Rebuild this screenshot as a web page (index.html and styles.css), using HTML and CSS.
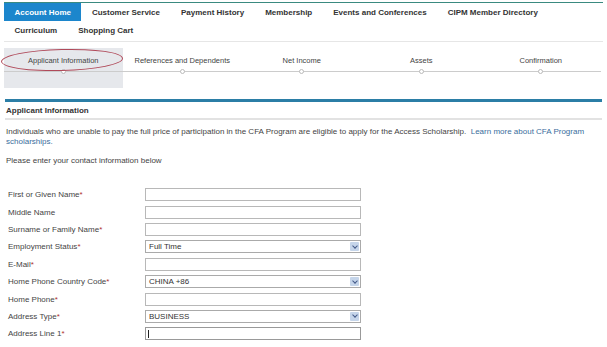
FILE: index.html
```html
<!DOCTYPE html>
<html lang="en">
  <head>
    <meta charset="UTF-8" />
    <meta name="viewport" content="width=device-width, initial-scale=1.0" />
    <title>Access Scholarship - Applicant Information</title>
    <link rel="stylesheet" href="styles.css">
  </head>
  <body>
    <div class="page">
      <nav class="topnav">
        <div class="nav-row">
          <a class="nav-item active">Account Home</a>
          <a class="nav-item">Customer Service</a>
          <a class="nav-item">Payment History</a>
          <a class="nav-item">Membership</a>
          <a class="nav-item">Events and Conferences</a>
          <a class="nav-item">CIPM Member Directory</a>
        </div>
        <div class="nav-row">
          <a class="nav-item">Curriculum</a>
          <a class="nav-item">Shopping Cart</a>
        </div>
      </nav>

      <div class="steps">
        <div class="step current">
          <span class="step-label">Applicant Information</span>
          <span class="step-dot"></span>
          <span class="step-circle"></span>
        </div>
        <div class="step">
          <span class="step-label">References and Dependents</span>
          <span class="step-dot"></span>
        </div>
        <div class="step">
          <span class="step-label">Net Income</span>
          <span class="step-dot"></span>
        </div>
        <div class="step">
          <span class="step-label">Assets</span>
          <span class="step-dot"></span>
        </div>
        <div class="step">
          <span class="step-label">Confirmation</span>
          <span class="step-dot"></span>
        </div>
      </div>

      <section class="panel">
        <h2 class="panel-title">Applicant Information</h2>
        <p class="intro">
          Individuals who are unable to pay the full price of participation in the CFA Program are eligible to apply for the Access Scholarship.&nbsp;
          <a class="link">Learn more about CFA Program scholarships.</a>
        </p>
        <p class="hint">Please enter your contact information below</p>

        <form class="form">
          <div class="row">
            <label>First or Given Name<span class="req">*</span></label>
            <input type="text" class="field" />
          </div>
          <div class="row">
            <label>Middle Name</label>
            <input type="text" class="field" />
          </div>
          <div class="row">
            <label>Surname or Family Name<span class="req">*</span></label>
            <input type="text" class="field" />
          </div>
          <div class="row">
            <label>Employment Status<span class="req">*</span></label>
            <div class="field select">Full Time<span class="arrow"></span></div>
          </div>
          <div class="row">
            <label>E-Mail<span class="req">*</span></label>
            <input type="text" class="field" />
          </div>
          <div class="row">
            <label>Home Phone Country Code<span class="req">*</span></label>
            <div class="field select">CHINA +86<span class="arrow"></span></div>
          </div>
          <div class="row">
            <label>Home Phone<span class="req">*</span></label>
            <input type="text" class="field" />
          </div>
          <div class="row">
            <label>Address Type<span class="req">*</span></label>
            <div class="field select">BUSINESS<span class="arrow"></span></div>
          </div>
          <div class="row">
            <label>Address Line 1<span class="req">*</span></label>
            <div class="field focused"><span class="caret"></span></div>
          </div>
        </form>
      </section>
    </div>
  </body>
</html>
```

FILE: styles.css
```css
* {
  margin: 0;
  padding: 0;
  box-sizing: border-box;
}
body {
  font-family: "Liberation Sans", Arial, sans-serif;
  font-size: 8px;
  color: #444;
  background: #fff;
}
.page {
  width: 607px;
  height: 347px;
  overflow: hidden;
}
.topnav {
  margin: 2px 4px 0 4px;
  border-top: 1px solid #3a8a80;
  border-bottom: 1px solid #e6e6e6;
  padding-bottom: 2px;
}
.nav-row {
  display: flex;
  height: 18px;
}
.nav-item {
  display: flex;
  align-items: center;
  padding: 0 10.5px;
  font-weight: bold;
  font-size: 8px;
  color: #333;
}
.nav-item.active {
  background: #1c86cc;
  color: #fff;
}
.steps {
  display: grid;
  grid-template-columns: repeat(5, 119.5px);
  margin: 6px 0 0 3px;
  height: 40px;
}
.step {
  position: relative;
  display: flex;
  flex-direction: column;
  align-items: center;
  padding-top: 8px;
}
.step::before {
  content: "";
  position: absolute;
  left: 0;
  right: 0;
  top: 23px;
  border-top: 1px solid #ccc;
}
.step.current {
  background: #e6e8ec;
  margin-left: 1px;
}
.step-label {
  font-size: 7.5px;
  color: #444;
  line-height: 9px;
}
.step-dot {
  position: relative;
  margin-top: 4px;
  width: 5px;
  height: 5px;
  border: 1px solid #bbb;
  border-radius: 50%;
  background: #fff;
}
.step-circle {
  position: absolute;
  left: -3px;
  top: 1px;
  width: 122px;
  height: 22px;
  border: 1px solid #b04a5a;
  border-radius: 50%;
  transform: rotate(-1.5deg);
}
.panel {
  margin: 11px 5px 0 5px;
  border-top: 3px solid #2b7ea6;
}
.panel-title {
  font-size: 8px;
  font-weight: bold;
  color: #333;
  padding: 4px 1px 3px;
  border-bottom: 2px solid #e2e2e2;
}
.intro {
  margin-top: 7px;
  padding-left: 1px;
  max-width: 590px;
  line-height: 10px;
  color: #444;
}
.link {
  color: #3a6d9c;
}
.hint {
  margin-top: 9px;
  padding-left: 1px;
}
.form {
  margin-top: 21px;
}
.row {
  display: flex;
  align-items: center;
  height: 17.4px;
}
.row label {
  width: 140px;
  padding-left: 3px;
  font-size: 8px;
  color: #444;
}
.req {
  color: #b03030;
}
.field {
  position: relative;
  width: 216px;
  height: 13px;
  border: 1px solid #b8b8b8;
  background: #fff;
  font-family: "Liberation Sans", Arial, sans-serif;
  font-size: 8px;
  color: #333;
}
.select {
  display: flex;
  align-items: center;
  padding-left: 3px;
  border-color: #aaa;
}
.arrow {
  position: absolute;
  right: 1px;
  top: 1px;
  width: 9px;
  height: 9px;
  background: #c5d5ea;
  border-radius: 1px;
}
.arrow::after {
  content: "";
  position: absolute;
  left: 2.5px;
  top: 1.5px;
  width: 3px;
  height: 3px;
  border-right: 1px solid #445a88;
  border-bottom: 1px solid #445a88;
  transform: rotate(45deg);
}
.focused {
  border-color: #999;
}
.caret {
  position: absolute;
  left: 2px;
  top: 2px;
  width: 1px;
  height: 8px;
  background: #222;
}
```
